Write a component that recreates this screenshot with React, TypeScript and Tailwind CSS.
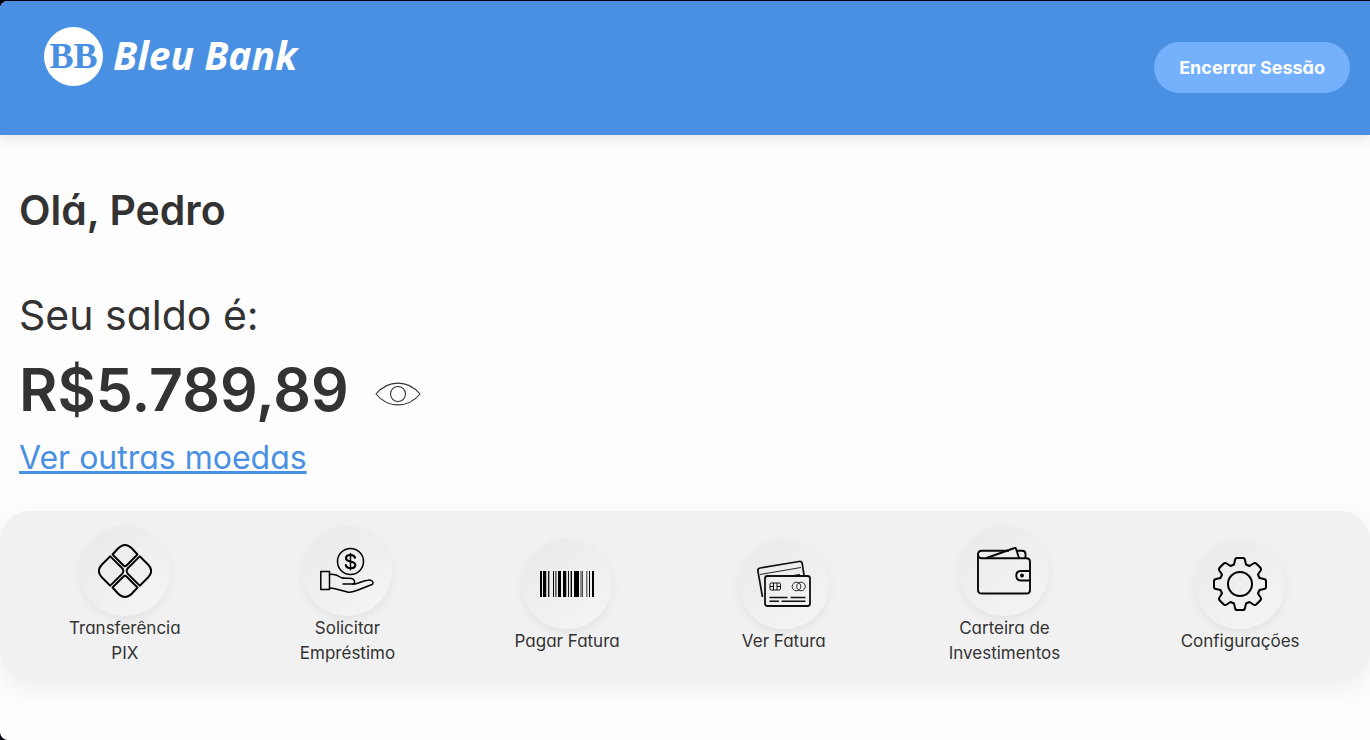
import { useState } from 'react';
import type { ReactNode } from 'react';

function PixIcon() {
  return (
    <svg viewBox="0 0 54 54" className="size-[54px]" fill="none" stroke="#000" strokeWidth="1.9" strokeLinejoin="round" aria-hidden="true">
      <path d="M14.5 10.5 L20 4.5 Q27 -2.5 34 4.5 L39.500 10.500 L28.500 21.500 Q27 23 25.500 21.500 Z" />
      <path d="M14.500 43.500 L20 49.500 Q27 56.500 34 49.500 L39.500 43.500 L28.500 32.500 Q27 31 25.500 32.500 Z" />
      <path d="M12.300 12.300 L4 20.500 Q-2.300 27 4 33.500 L12.300 41.700 L24 30 Q26.700 27 24 24 Z" />
      <path d="M41.700 12.300 L50 20.500 Q56.300 27 50 33.500 L41.700 41.700 L30 30 Q27.300 27 30 24 Z" />
    </svg>
  );
}

function LoanIcon() {
  return (
    <svg viewBox="0 0 54 54" className="size-[54px]" fill="none" stroke="#000" strokeWidth="1.5" strokeLinejoin="round" strokeLinecap="round" aria-hidden="true">
      <circle cx="30.500" cy="17.500" r="13" />
      <path strokeWidth="2.100" d="M35 13.800 C34.500 11.500 32.500 11 30.500 11 C28 11 26 12.200 26 14.200 C26 16.500 28.500 17 30.500 17.500 C33 18 35.300 18.800 35.300 21 C35.300 23.200 33 24.200 30.700 24.200 C28.300 24.200 26.200 23.300 25.800 21" />
      <path d="M30.500 9.500 V25.800" strokeWidth="1.400" />
      <rect x=".8" y="27.500" width="8.700" height="18" />
      <path d="M9.500 30.500 C15 29.500 18 31.500 21 33.500 C24 35 28 34 31.500 34.500 C35 35 35.500 39.200 33 40 H23" />
      <path d="M33 40.200 C38 40 43 36.500 48 36.300 C52 35 54.500 39 52 40.500 L38 46 C34 47.500 31 49 27.500 48 L14 44.500 C12.500 44 11 44 9.500 44" />
    </svg>
  );
}

const bars: [number, number, number][] = [
  [0, 2, 1], [3, 3, 1], [6, 1, 0.25], [8, 1, 0.9], [9, 1, 0.35], [13, 1, 1], [15, 1, 0.6], [16, 1, 0.4], [18, 3, 1],
  [23, 3, 1], [26, 1, 0.3], [28, 1, 0.9], [30, 1, 0.4], [31, 1, 1], [34, 5, 1], [40, 2, 0.4], [42, 1, 0.7],
  [46, 1, 0.55], [47, 1, 0.25], [49, 1, 0.95], [52, 2, 1],
];

function BarcodeIcon() {
  return (
    <svg viewBox="0 0 54 54" className="size-[54px]" shapeRendering="crispEdges" aria-hidden="true">
      {bars.map(([x, width, opacity]) => (
        <rect key={x} x={x} y="14" width={width} height="26" fill="#000" fillOpacity={opacity} />
      ))}
    </svg>
  );
}

function CardsIcon() {
  return (
    <svg viewBox="0 0 54 54" className="size-[54px]" fill="none" stroke="#111" strokeWidth="1.800" strokeLinejoin="round" aria-hidden="true">
      <path d="M5.500 40 L.9 14 Q.6 11.500 3 11 L42 4.500 Q44.700 4 45.200 6.500 L47 18" strokeWidth="1.700" />
      <path d="M3 17.500 L44 10.500 M36 18.500 L43 17.300" strokeWidth=".9" />
      <rect x="8" y="19" width="45" height="30" rx="2.500" />
      <rect x="13" y="26" width="10.500" height="7" rx="1.200" strokeWidth="1" />
      <path d="M13 29.500 H16.500 M20 29.500 H23.500 M16.500 26 V33 M20 26 V33" strokeWidth="1" />
      <circle cx="39.500" cy="29.500" r="4.300" strokeWidth=".9" />
      <circle cx="44" cy="29.500" r="4.300" strokeWidth=".9" />
      <path d="M12.500 40.500 H30.500 M33.500 40.500 H48.500 M12.500 44.300 H22 M24.500 44.300 H48.500" strokeWidth="1.500" />
    </svg>
  );
}

function WalletIcon() {
  return (
    <svg viewBox="0 0 54 54" className="size-[54px]" fill="none" stroke="#080808" strokeWidth="1.900" strokeLinejoin="round" aria-hidden="true">
      <path d="M9.500 14 L37.500 4 Q38.700 3.500 39 4.700 L42 14" />
      <path d="M32 6.800 H4.500 Q1 6.800 1 10.300 Q1 14 4.500 14.300 H49.500 Q53 14.300 53 18 V46 Q53 49.500 49.500 49.500 H4.500 Q1 49.500 1 46 V10.500 M39.500 6.800 H45 Q48.500 6.800 48.500 10 V14.300" />
      <path d="M53 27 H44 Q39.300 27 39.300 31.500 Q39.300 36.500 44 36.500 H53" />
      <circle cx="45" cy="31.500" r="1" fill="#080808" />
    </svg>
  );
}

function GearIcon() {
  return (
    <svg viewBox="0 0 54 54" className="size-[54px]" fill="none" stroke="#000" strokeWidth="2" strokeLinejoin="round" aria-hidden="true">
      <circle cx="27" cy="27" r="12" />
      <path d="M22 3 Q22.300 1 24.300 1 H29.700 Q31.700 1 32 3 L33 7.500 L36.500 9 L40.300 6.500 Q42 5.300 43.500 6.800 L47.200 10.500 Q48.700 12 47.500 13.700 L45 17.500 L46.500 21 L51 22 Q53 22.300 53 24.300 V29.700 Q53 31.700 51 32 L46.500 33 L45 36.500 L47.500 40.300 Q48.700 42 47.200 43.500 L43.500 47.200 Q42 48.700 40.300 47.500 L36.500 45 L33 46.500 L32 51 Q31.700 53 29.700 53 H24.300 Q22.300 53 22 51 L21 46.500 L17.500 45 L13.700 47.500 Q12 48.700 10.500 47.200 L6.800 43.500 Q5.300 42 6.500 40.300 L9 36.500 L7.500 33 L3 32 Q1 31.700 1 29.700 V24.300 Q1 22.300 3 22 L7.500 21 L9 17.500 L6.500 13.700 Q5.300 12 6.800 10.500 L10.500 6.800 Q12 5.300 13.700 6.500 L17.500 9 L21 7.500 Z" />
    </svg>
  );
}

type Action = { lines: string[]; icon: ReactNode; width: string };

const actions: Action[] = [
  { lines: ['Transferência', 'PIX'], icon: <PixIcon />, width: 'w-[110px]' },
  { lines: ['Solicitar', 'Empréstimo'], icon: <LoanIcon />, width: 'w-24' },
  { lines: ['Pagar Fatura'], icon: <BarcodeIcon />, width: 'w-[104px]' },
  { lines: ['Ver Fatura'], icon: <CardsIcon />, width: 'w-[90px]' },
  { lines: ['Carteira de', 'Investimentos'], icon: <WalletIcon />, width: 'w-28' },
  { lines: ['Configurações'], icon: <GearIcon />, width: 'w-[120px]' },
];

export default function App() {
  const [visible, setVisible] = useState(true);

  return (
    <div className="min-h-screen bg-[#02020f] pt-px font-['Inter',sans-serif] text-[#333] [font-feature-settings:'cv11']">
      <div className="min-h-[calc(100vh-1px)] overflow-hidden rounded-l-lg bg-[#fdfdfd]">
        <header className="flex h-[134px] items-center justify-between bg-[#4a90e2] px-5 pb-0.5 shadow-[0_4px_12px_rgba(0,0,0,0.1)]">
          <a href="#" className="mb-[22px] ml-6 flex items-center gap-2.5 text-white">
            <span className="flex size-[59px] items-center justify-center rounded-full bg-white font-['Liberation_Serif',serif] text-4xl leading-none font-bold text-[#4a90e2]">
              BB
            </span>
            <span className="pb-0.5 font-['Open_Sans',sans-serif] text-[39px] leading-[48px] font-bold whitespace-nowrap italic">Bleu Bank</span>
          </a>
          <button type="button" className="h-[51px] cursor-pointer rounded-full bg-[#74b0fb] px-[25px] text-[18px] font-bold text-white">
            Encerrar Sessão
          </button>
        </header>

        <main>
          <section className="px-[19px] pt-[45px]">
            <h1 className="text-[41px] leading-[60px] font-semibold">Olá, Pedro</h1>
            <p className="mt-[45px] text-[41px] leading-[60px]">Seu saldo é:</p>
            <div className="flex items-center gap-[26px]">
              <strong className="text-[59px] leading-[90px] font-semibold">{visible ? 'R$5.789,89' : 'R$••••••'}</strong>
              <button type="button" aria-label="Mostrar ou ocultar saldo" onClick={() => setVisible(!visible)} className="mt-2 cursor-pointer">
                <svg viewBox="0 0 46 24" className="h-6 w-[46px]" fill="none" stroke="#333" strokeWidth="1.100" aria-hidden="true">
                  <path d="M1 12 C13 -2.500 33 -2.500 45 12 C33 26.500 13 26.500 1 12 Z" />
                  <circle cx="23" cy="12" r="7.500" />
                </svg>
              </button>
            </div>
            <a href="#" className="block w-fit text-[32px] leading-[45px] text-[#4a90e2] underline decoration-3 underline-offset-2">Ver outras moedas</a>
          </section>

          <nav className="mt-[31px] flex min-h-[170px] items-center justify-around rounded-[30px] bg-[#f1f1f1] px-2.5 py-[15px] shadow-[0_8px_24px_rgba(0,0,0,0.06)]">
            {actions.map(({ lines, icon, width }) => (
              <a key={lines[0]} href="#" className={`flex flex-col items-center ${width}`}>
                <span className="flex size-[90px] items-center justify-center rounded-full bg-linear-145 from-[#e9e9e9] to-[#f5f5f5] shadow-[0_4px_10px_rgba(0,0,0,0.06)]">
                  {icon}
                </span>
                <span className="text-center text-[17px] leading-[25px] whitespace-nowrap">
                  {lines.map((line) => (
                    <span key={line} className="block">{line}</span>
                  ))}
                </span>
              </a>
            ))}
          </nav>
        </main>
      </div>
    </div>
  );
}
